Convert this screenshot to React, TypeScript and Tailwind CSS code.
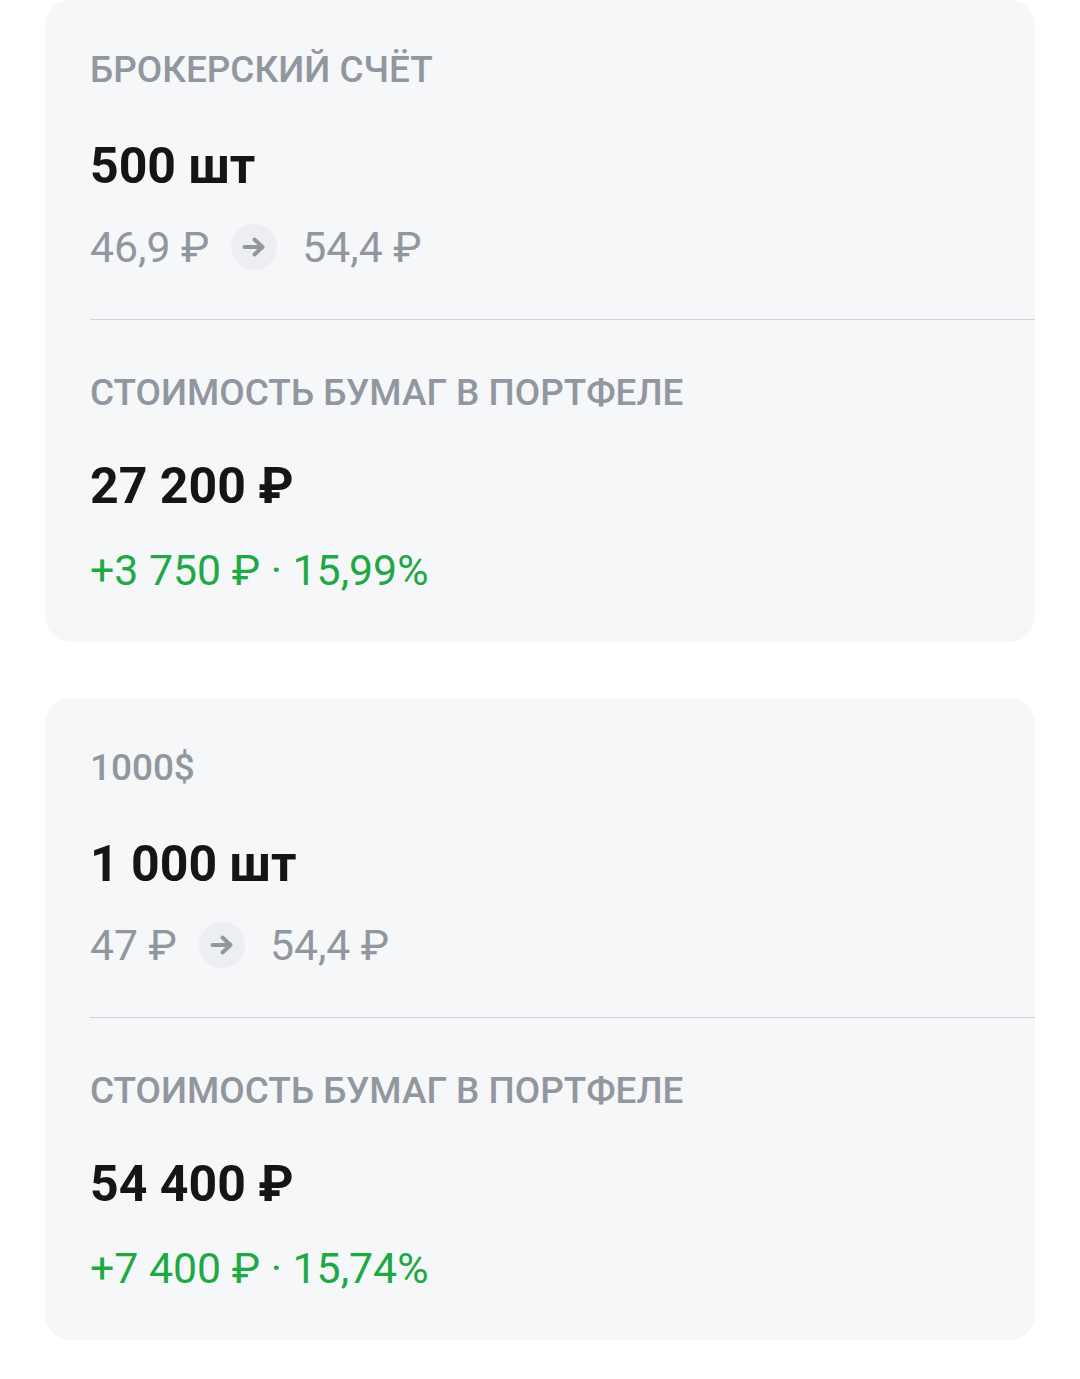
const font = { fontFamily: "Roboto, sans-serif" };

type Holding = {
  title: string;
  qty: string;
  buy: string;
  now: string;
  value: string;
  gain: string;
};

const holdings: Holding[] = [
  { title: "БРОКЕРСКИЙ СЧЁТ", qty: "500 шт", buy: "46,9 ₽", now: "54,4 ₽", value: "27 200 ₽", gain: "+3 750 ₽ · 15,99%" },
  { title: "1000$", qty: "1 000 шт", buy: "47 ₽", now: "54,4 ₽", value: "54 400 ₽", gain: "+7 400 ₽ · 15,74%" },
];

function Card({ h }: { h: Holding }) {
  return (
    <div className="w-[990px] h-[642px] rounded-[26px] bg-[#f5f7f9] pl-[45px] pt-[49px]">
      <div className="text-[36.9px] leading-[42px] font-medium text-[#91969f]">{h.title}</div>
      <div className="mt-[45px] text-[50px] leading-[60px] font-bold text-[#151515]">{h.qty}</div>
      <div className="mt-[27px] flex items-center text-[42.7px] leading-[48px] text-[#91969f]">
        <span>{h.buy}</span>
        <span className="ml-[22px] flex h-[46px] w-[46px] items-center justify-center rounded-full bg-[#eceef1]">
          <svg width="24" height="24" viewBox="0 0 24 24" fill="none" stroke="#91969f" strokeWidth="4" strokeLinecap="round" strokeLinejoin="round">
            <path d="M2.5 12H20.5M12.5 4.5l8 7.5-8 7.5" />
          </svg>
        </span>
        <span className="ml-[25px]">{h.now}</span>
      </div>
      <div className="mt-[48px] h-px bg-[#cfd2d6]" />
      <div className="mt-[52px] text-[36.9px] leading-[42px] font-medium text-[#91969f]">СТОИМОСТЬ БУМАГ В ПОРТФЕЛЕ</div>
      <div className="mt-[42px] text-[50px] leading-[60px] font-bold text-[#151515]">{h.value}</div>
      <div className="mt-[30px] text-[42.8px] leading-[48px] text-[#1fa944]">{h.gain}</div>
    </div>
  );
}

export default function App() {
  return (
    <div className="min-h-[1379px] bg-white pl-[45px] flex flex-col gap-[56px]" style={font}>
      {holdings.map((h) => (
        <Card key={h.title} h={h} />
      ))}
    </div>
  );
}
